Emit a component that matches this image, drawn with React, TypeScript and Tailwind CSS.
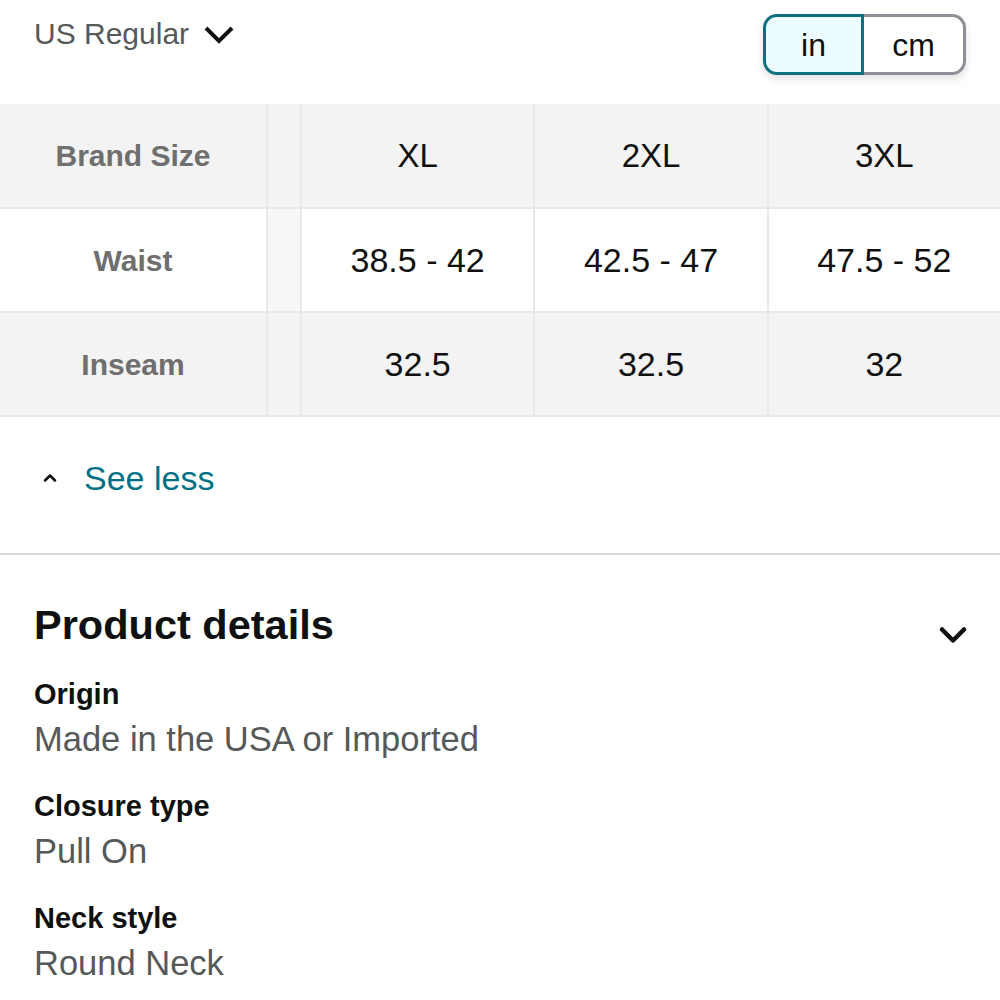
import { ChevronDown, ChevronUp } from 'lucide-react';

const sizes = ['XL', '2XL', '3XL'];
const rows = [
  { label: 'Waist', values: ['38.5 - 42', '42.5 - 47', '47.5 - 52'], white: true },
  { label: 'Inseam', values: ['32.5', '32.5', '32'], white: false },
];

const details = [
  { label: 'Origin', value: 'Made in the USA or Imported' },
  { label: 'Closure type', value: 'Pull On' },
  { label: 'Neck style', value: 'Round Neck' },
];

export default function App() {
  return (
    <div className="w-[1000px] h-[1000px] overflow-hidden bg-white font-['Liberation_Sans',Arial,sans-serif]">
      {/* unit row */}
      <div className="h-[104px] flex items-start justify-between pl-[34px] pr-[34px]">
        <div className="flex items-center gap-[14px] mt-[11px] text-[30px] text-[#565959]">
          <span>US Regular</span>
          <svg width="32" height="20" viewBox="0 0 32 20" className="mt-[2px]">
            <path d="M3 3 L16 16 L29 3" fill="none" stroke="#0f1111" strokeWidth="4" />
          </svg>
        </div>
        <div className="mt-[14px] flex h-[61px] rounded-[14px] shadow-[0_4px_8px_rgba(0,0,0,0.12)]">
          <button className="w-[101px] h-full rounded-l-[14px] border-[3px] border-[#0f6f7e] bg-[#edfdff] text-[32px] text-[#0f1111] flex items-center justify-center">
            in
          </button>
          <button className="w-[102px] h-full rounded-r-[14px] border-[3px] border-l-0 border-[#8d9096] bg-white text-[32px] text-[#0f1111] flex items-center justify-center">
            cm
          </button>
        </div>
      </div>

      {/* size table */}
      <div className="grid grid-cols-[266px_32px_1fr_1fr_1fr] gap-[2px] bg-[#e9e9e9] pb-[2px]">
        <div className="h-[103px] bg-[#f3f3f3] flex items-center justify-center text-[30px] font-bold text-[#6f6f6f]">
          Brand Size
        </div>
        <div className="bg-[#f3f3f3]" />
        {sizes.map((s) => (
          <div key={s} className="h-[103px] bg-[#f3f3f3] flex items-center justify-center text-[33px] text-[#0f1111]">
            {s}
          </div>
        ))}
        {rows.map((r) => (
          <>
            <div
              key={r.label}
              className={`h-[102px] flex items-center justify-center text-[30px] font-bold text-[#6f6f6f] ${r.white ? 'bg-white' : 'bg-[#f3f3f3]'}`}
            >
              {r.label}
            </div>
            <div className={r.white ? 'bg-[#f7f7f7]' : 'bg-[#f3f3f3]'} />
            {r.values.map((v, i) => (
              <div
                key={i}
                className={`h-[102px] flex items-center justify-center text-[34px] text-[#0f1111] ${r.white ? 'bg-white' : 'bg-[#f3f3f3]'}`}
              >
                {v}
              </div>
            ))}
          </>
        ))}
      </div>

      {/* see less */}
      <div className="h-[136px] flex items-center pl-[40px] gap-[24px] pb-[14px]">
        <ChevronUp className="w-[20px] h-[20px] text-[#0f1111]" strokeWidth={3} />
        <span className="text-[34px] text-[#007185]">See less</span>
      </div>
      <div className="h-[2px] bg-[#d5d9d9]" />

      {/* product details */}
      <div className="px-[34px] pt-[38px]">
        <div className="flex items-center justify-between">
          <h2 className="text-[41.5px] font-bold text-[#0f1111] leading-[50px]">Product details</h2>
          <ChevronDown className="w-[44px] h-[44px] text-[#0f1111] mt-[20px] -mr-[9px]" strokeWidth={2.5} />
        </div>
        <div className="flex flex-col gap-[22px] mt-[16px]">
          {details.map((d) => (
            <div key={d.label} className="flex flex-col">
              <span className="text-[29px] font-bold text-[#0f1111] leading-[42px]">{d.label}</span>
              <span className="text-[34.5px] text-[#565959] leading-[48px]">{d.value}</span>
            </div>
          ))}
        </div>
      </div>
    </div>
  );
}
